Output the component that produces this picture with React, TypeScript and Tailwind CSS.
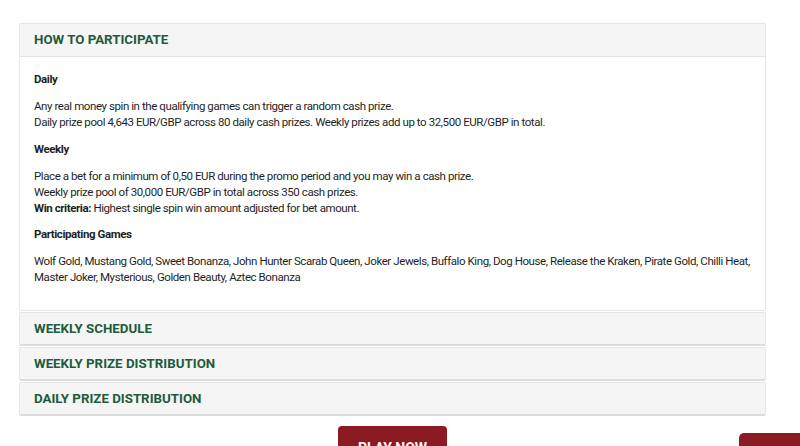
import React from "react";

function CollapsedHeader({ title }: { title: string }) {
  return (
    <div className="h-[34px] bg-[#f5f5f5] border border-[#e6e6e6] border-b-[2px] border-b-[#dcdcdc] rounded-[2px] flex items-center px-[14px]">
      <span className="text-[13.3px] font-bold text-[#1d5b3c]">{title}</span>
    </div>
  );
}

export default function App() {
  return (
    <div
      className="w-[800px] h-[446px] overflow-hidden bg-white relative"
      style={{ fontFamily: "Roboto, 'Liberation Sans', Arial, sans-serif" }}
    >
      <div className="pt-[23px] pl-[19px] w-[766px] flex flex-col gap-[1px]">
        <div className="border border-[#e6e6e6] rounded-[2px]">
          <div className="h-[33px] bg-[#f5f5f5] border-b border-[#e3e3e3] flex items-center px-[14px]">
            <span className="text-[13.3px] font-bold text-[#1d5b3c]">HOW TO PARTICIPATE</span>
          </div>
          <div className="px-[14px] pt-[14px] pb-[25px] text-[11.5px] tracking-[-0.42px] leading-[16px] text-[#1f1f1f] flex flex-col gap-[11px]">
            <p className="font-bold">Daily</p>
            <p>
              Any real money spin in the qualifying games can trigger a random cash prize.
              <br />
              Daily prize pool 4,643 EUR/GBP across 80 daily cash prizes. Weekly prizes add up to 32,500 EUR/GBP in total.
            </p>
            <p className="font-bold">Weekly</p>
            <p className="mb-[-1px]">
              Place a bet for a minimum of 0,50 EUR during the promo period and you may win a cash prize.
              <br />
              Weekly prize pool of 30,000 EUR/GBP in total across 350 cash prizes.
              <br />
              <span className="font-bold">Win criteria:</span> Highest single spin win amount adjusted for bet amount.
            </p>
            <p className="font-bold">Participating Games</p>
            <p>
              <span className="whitespace-nowrap">
                Wolf Gold, Mustang Gold, Sweet Bonanza, John Hunter Scarab Queen, Joker Jewels, Buffalo King, Dog House, Release the Kraken, Pirate Gold, Chilli Heat,
              </span>
              <br />
              Master Joker, Mysterious, Golden Beauty, Aztec Bonanza
            </p>
          </div>
        </div>
        <CollapsedHeader title="WEEKLY SCHEDULE" />
        <CollapsedHeader title="WEEKLY PRIZE DISTRIBUTION" />
        <CollapsedHeader title="DAILY PRIZE DISTRIBUTION" />
      </div>
      <div className="flex justify-between mt-[10px]">
        <div className="ml-[338px] w-[109px] h-[40px] bg-[#8c1a22] rounded-[4px] flex justify-center pt-[14px]">
          <span className="text-white font-bold text-[14px] leading-[16px]">PLAY NOW</span>
        </div>
        <div className="mt-[7px] w-[61px] h-[40px] bg-[#8c1a22] rounded-tl-[5px]" />
      </div>
    </div>
  );
}
